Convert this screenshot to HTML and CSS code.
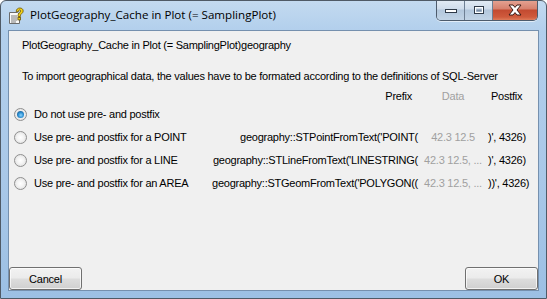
FILE: index.html
```html
<!DOCTYPE html>
<html lang="en">
<head>
    <meta charset="UTF-8">
    <title>PlotGeography_Cache in Plot (= SamplingPlot)</title>
    <link rel="stylesheet" href="styles.css">
</head>
<body>
<div class="window">
    <!-- Caption bar -->
    <div class="titlebar">
        <svg class="app-icon" width="18" height="18" viewBox="0 0 18 18">
            <path d="M2.5 5.5h8l2 2v9h-10z" fill="#fafafa" stroke="#6b6b6b"/>
            <path d="M4 9h6M4 11h6M4 13h6M4 15h5" stroke="#7a7a7a" stroke-width="1"/>
            <path d="M9.2 4.6c0-2.4 1.8-3.6 3.6-3.6 2 0 3.4 1.2 3.4 3 0 2.4-2.8 2.6-2.8 4.8v0.8h-2.4v-1c0-2.6 2.6-3 2.6-4.6 0-0.7-0.5-1.1-1-1.1-0.7 0-1 0.6-1 1.7z" fill="#f2d21a" stroke="#6a5200" stroke-width="0.8"/>
            <rect x="10.9" y="10.5" width="2.6" height="2.4" fill="#f2d21a" stroke="#6a5200" stroke-width="0.8"/>
        </svg>
        <span class="title">PlotGeography_Cache in Plot (= SamplingPlot)</span>
        <div class="caption-buttons">
            <div class="cap-btn">
                <svg width="14" height="8" viewBox="0 0 14 8"><rect x="1.5" y="3.5" width="11" height="3" fill="#fff" stroke="#2f3a48"/></svg>
            </div>
            <div class="cap-btn">
                <svg width="12" height="10" viewBox="0 0 12 10"><rect x="1.5" y="1.5" width="9" height="7" fill="none" stroke="#2f3a48" stroke-width="1"/><rect x="2.5" y="2.5" width="7" height="5" fill="none" stroke="#fff" stroke-width="1"/><rect x="3.5" y="4.5" width="5" height="2" fill="#7d8ea3"/></svg>
            </div>
            <div class="cap-btn close">
                <svg width="16" height="12" viewBox="0 0 16 12"><path d="M2 1h4l2 2.4 2-2.4h4l-4 5 4 5h-4l-2-2.4-2 2.4h-4l4-5z" fill="#fff" stroke="#3b1a14" stroke-width="1" stroke-linejoin="round"/></svg>
            </div>
        </div>
    </div>

    <!-- Client area -->
    <div class="client">
        <p class="heading">PlotGeography_Cache in Plot (= SamplingPlot)geography</p>
        <p class="hint">To import geographical data, the values have to be formated according to the definitions of SQL-Server</p>

        <div class="options">
            <span></span>
            <span class="head-prefix">Prefix</span>
            <span class="head-data">Data</span>
            <span class="head-postfix">Postfix</span>

            <label class="option"><span class="radio checked"></span>Do not use pre- and postfix</label>
            <span></span><span></span><span></span>

            <label class="option"><span class="radio"></span>Use pre- and postfix for a POINT</label>
            <span class="prefix">geography::STPointFromText('POINT(</span>
            <span class="data">42.3 12.5</span>
            <span class="postfix">)', 4326)</span>

            <label class="option"><span class="radio"></span>Use pre- and postfix for a LINE</label>
            <span class="prefix">geography::STLineFromText('LINESTRING(</span>
            <span class="data">42.3 12.5, ...</span>
            <span class="postfix">)', 4326)</span>

            <label class="option"><span class="radio"></span>Use pre- and postfix for an AREA</label>
            <span class="prefix">geography::STGeomFromText('POLYGON((</span>
            <span class="data">42.3 12.5, ...</span>
            <span class="postfix">))', 4326)</span>
        </div>

        <div class="buttons">
            <button class="btn">Cancel</button>
            <button class="btn">OK</button>
        </div>
    </div>
</div>
</body>
</html>
```

FILE: styles.css
```css
/* Windows 7 basic style dialog */
body {
    margin: 0;
    background: #ffffff;
}

.window {
    width: 547px;
    height: 299px;
    box-sizing: border-box;
    display: flex;
    flex-direction: column;
    border: 1px solid #4f5a66;
    border-radius: 6px 6px 0 0;
    background: linear-gradient(180deg, #c3daf0 0%, #b2cfec 30px, #a9c8e8 60%, #9cc0e4 100%);
    overflow: hidden;
}

/* Title bar */
.titlebar {
    height: 29px;
    display: flex;
    align-items: flex-start;
    position: relative;
}

.app-icon {
    margin: 6px 0 0 6px;
    flex: none;
}

.title {
    margin: 6px 0 0 5px;
    font-family: "Open Sans", "Noto Sans", sans-serif;
    font-size: 11.6px;
    line-height: 16px;
    color: #000;
}

.caption-buttons {
    margin-left: auto;
    margin-right: 8px;
    margin-top: -1px;
    display: flex;
    height: 20px;
    border: 1px solid #4d5b6c;
    border-top: none;
    border-radius: 0 0 5px 5px;
    overflow: hidden;
    box-shadow: 0 1px 0 rgba(255, 255, 255, 0.6);
}

.cap-btn {
    width: 27px;
    display: flex;
    align-items: center;
    justify-content: center;
    background: linear-gradient(180deg, #e3ecf5 0%, #cfdceb 45%, #b3c7dc 50%, #c2d4e6 100%);
    border-right: 1px solid #6e7f93;
}

.cap-btn.close {
    width: 44px;
    border-right: none;
    background: linear-gradient(180deg, #e6a595 0%, #d6806d 45%, #c34a31 50%, #cf5a3c 85%, #de7b5a 100%);
}

/* Client area */
.client {
    flex: 1;
    margin: 0 7px 7px 7px;
    background: #f0f0f0;
    border: 1px solid #7590ae;
    display: flex;
    flex-direction: column;
    font-family: "Liberation Sans", Arial, sans-serif;
    font-size: 11px;
    line-height: 13px;
    letter-spacing: -0.24px;
    color: #000;
}

.heading {
    margin: 8px 0 0 13px;
}

.hint {
    margin: 18px 0 0 13px;
}

/* Options grid */
.options {
    margin-top: 7px;
    display: grid;
    grid-template-columns: 197px 212px 70px auto;
    grid-template-rows: 13px repeat(4, 23px);
    align-items: center;
}

.head-prefix {
    text-align: right;
    padding-right: 6px;
}

.head-data {
    text-align: center;
    color: #a0a0a0;
}

.head-postfix {
    padding-left: 3px;
}

.option {
    display: flex;
    align-items: center;
    padding-left: 5px;
    white-space: nowrap;
}

.radio {
    width: 11px;
    height: 11px;
    border: 1px solid #8f8f8f;
    border-radius: 50%;
    background: radial-gradient(circle at 50% 50%, #ffffff 0%, #f4f4f4 40%, #d8d8d8 100%);
    margin-right: 7px;
    position: relative;
    flex: none;
}

.radio.checked::after {
    content: '';
    position: absolute;
    left: 2px;
    top: 2px;
    width: 7px;
    height: 7px;
    border-radius: 50%;
    background: radial-gradient(circle at 55% 60%, #8fd4fb 0%, #2b8fd3 45%, #18416a 100%);
}

.prefix {
    text-align: right;
    white-space: nowrap;
}

.data {
    text-align: center;
    color: #a0a0a0;
    white-space: nowrap;
}

.postfix {
    white-space: nowrap;
}

/* Bottom buttons */
.buttons {
    margin-top: auto;
    display: flex;
    justify-content: space-between;
}

.btn {
    width: 73px;
    height: 23px;
    font-family: "Liberation Sans", Arial, sans-serif;
    font-size: 11px;
    letter-spacing: -0.24px;
    color: #000;
    border: 1px solid #707070;
    border-radius: 3px;
    background: linear-gradient(180deg, #f2f2f2 0%, #ebebeb 48%, #dddddd 52%, #cfcfcf 100%);
    box-shadow: inset 0 0 0 1px rgba(255, 255, 255, 0.7);
    padding: 0;
}
```
